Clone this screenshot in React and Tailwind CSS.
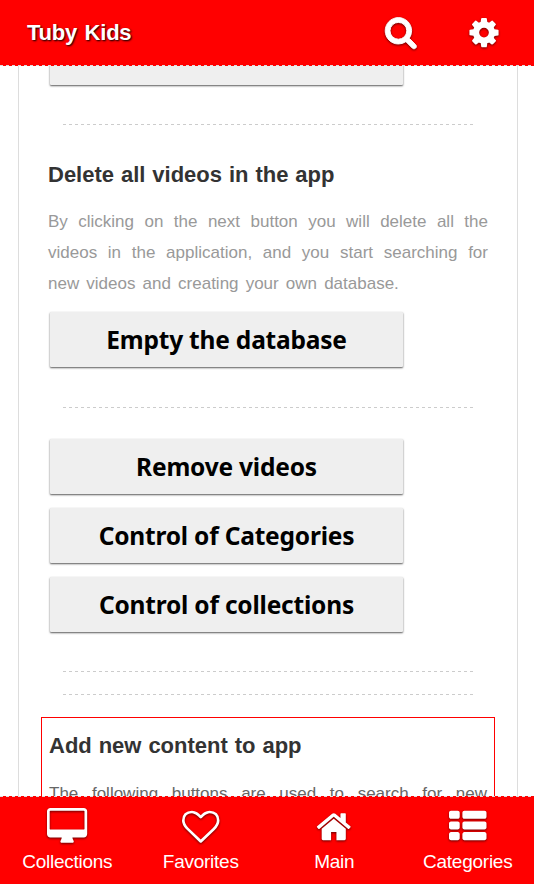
const icons = {
    search: 'M1216 832q0-185-131.5-316.5t-316.5-131.5-316.5 131.5-131.5 316.5 131.5 316.5 316.5 131.5 316.5-131.5 131.5-316.5zm512 832q0 52-38 90t-90 38q-54 0-90-38l-343-342q-179 124-399 124-143 0-273.5-55.5t-225-150-150-225-55.5-273.5 55.5-273.5 150-225 225-150 273.5-55.5 273.5 55.5 225 150 150 225 55.5 273.5q0 220-124 399l343 343q37 37 37 90z',
    cog: 'M1152 896q0-106-75-181t-181-75-181 75-75 181 75 181 181 75 181-75 75-181zm512-109v222q0 12-8 23t-20 13l-185 28q-19 54-39 91 35 50 107 138 10 12 10 25t-9 23q-27 37-99 108t-94 71q-12 0-26-9l-138-108q-44 23-91 38-16 136-29 186-7 28-36 28h-222q-14 0-24.5-8.5t-11.5-21.5l-28-184q-49-16-90-37l-141 107q-10 9-25 9-14 0-25-11-126-114-165-168-7-10-7-23 0-12 8-23 15-21 51-66.5t54-70.5q-27-50-41-99l-183-27q-13-2-21-12.5t-8-23.5v-222q0-12 8-23t19-13l186-28q14-46 39-92-40-57-107-138-10-12-10-24 0-10 9-23 26-36 98.5-107.5t94.5-71.5q13 0 26 10l138 107q44-23 91-38 16-136 29-186 7-28 36-28h222q14 0 24.5 8.5t11.5 21.5l28 184q49 16 90 37l142-107q9-9 24-9 13 0 25 10 129 119 165 170 7 8 7 22 0 12-8 23-15 21-51 66.5t-54 70.5q26 50 41 98l183 28q13 2 21 12.5t8 23.5z',
    desktop: 'M1792 992v-832q0-13-9.5-22.5t-22.5-9.5h-1600q-13 0-22.5 9.5t-9.5 22.5v832q0 13 9.5 22.5t22.5 9.5h1600q13 0 22.5-9.5t9.5-22.5zm128-832v1088q0 66-47 113t-113 47h-544q0 37 16 77.5t32 71 16 43.5q0 26-19 45t-45 19h-512q-26 0-45-19t-19-45q0-14 16-44t32-70 16-78h-544q-66 0-113-47t-47-113v-1088q0-66 47-113t113-47h1600q66 0 113 47t47 113z',
    heart: 'M1664 596q0-81-21.5-143t-55-98.5-81.5-59.5-94-31-98-8-112 25.5-110.5 64-86.5 72-60 61.5q-18 22-49 22t-49-22q-24-28-60-61.5t-86.5-72-110.5-64-112-25.5-98 8-94 31-81.5 59.5-55 98.5-21.5 143q0 168 187 355l581 560 580-559q188-188 188-356zm128 0q0 221-229 450l-623 600q-18 18-44 18t-44-18l-624-602q-10-8-27.5-26t-55.5-65.5-68-97.5-53.5-121-23.5-138q0-220 127-344t351-124q62 0 126.5 21.5t120 58 95.5 68.5 76 68q36-36 76-68t95.5-68.5 120-58 126.5-21.5q224 0 351 124t127 344z',
    home: 'M1472 992v480q0 26-19 45t-45 19h-384v-384h-256v384h-384q-26 0-45-19t-19-45v-480q0-1 .5-3t.5-3l575-474 575 474q1 2 1 6zm223-69l-62 74q-8 9-21 11h-3q-13 0-21-7l-692-577-692 577q-12 8-24 7-13-2-21-11l-62-74q-8-10-7-23.5t11-21.5l719-599q32-26 76-26t76 26l244 204v-195q0-14 9-23t23-9h192q14 0 23 9t9 23v408l219 182q10 8 11 21.5t-7 23.5z',
    list: 'M512 1248v192q0 40-28 68t-68 28h-320q-40 0-68-28t-28-68v-192q0-40 28-68t68-28h320q40 0 68 28t28 68zm0-512v192q0 40-28 68t-68 28h-320q-40 0-68-28t-28-68v-192q0-40 28-68t68-28h320q40 0 68 28t28 68zm1280 512v192q0 40-28 68t-68 28h-960q-40 0-68-28t-28-68v-192q0-40 28-68t68-28h960q40 0 68 28t28 68zm-1280-1024v192q0 40-28 68t-68 28h-320q-40 0-68-28t-28-68v-192q0-40 28-68t68-28h320q40 0 68 28t28 68zm1280 512v192q0 40-28 68t-68 28h-960q-40 0-68-28t-28-68v-192q0-40 28-68t68-28h960q40 0 68 28t28 68zm0-512v192q0 40-28 68t-68 28h-960q-40 0-68-28t-28-68v-192q0-40 28-68t68-28h960q40 0 68 28t28 68z',
};

const tabs = [
    { label: 'Collections', icon: 'desktop' },
    { label: 'Favorites', icon: 'heart' },
    { label: 'Main', icon: 'home' },
    { label: 'Categories', icon: 'list' },
];

function Icon({ name, className = '' }) {
    const width = name === 'desktop' ? 1920 : 1792;

    return (
        <svg
            viewBox={`0 0 ${width} 1792`}
            fill="currentColor"
            className={`shrink-0 overflow-visible drop-shadow-[0.5px_1px_1px_rgba(0,0,0,0.6)] ${className}`}
        >
            <path d={icons[name]} />
        </svg>
    );
}

function Divider({ className = '' }) {
    return (
        <div className={`ml-[15px] h-px w-[410px] bg-[repeating-linear-gradient(90deg,#ccc_0_3px,transparent_3px_5.985px)] ${className}`} />
    );
}

function ActionButton({ children, className = '' }) {
    return (
        <button className={`ml-[2px] block h-[55px] w-[353px] rounded-[1px] bg-[#efefef] font-['Noto_Sans',sans-serif] text-[24.5px] font-bold leading-[56px] tracking-[-0.2px] text-black shadow-[0_1px_2px_rgba(0,0,0,0.65)] ${className}`}>
            {children}
        </button>
    );
}

export default function App() {
    return (
        <div className="flex h-[884px] w-[534px] flex-col overflow-hidden bg-white font-['Liberation_Sans',Arial,sans-serif]">
            <header className="flex h-[66px] shrink-0 flex-col bg-[#f00] text-white">
                <div className="flex h-[65px] items-center pl-[27px]">
                    <h1 className="w-[356.5px] text-[22px] font-bold tracking-[-0.2px] [text-shadow:1px_1px_2px_#000] [word-spacing:1.5px]">Tuby Kids</h1>
                    <Icon name="search" className="h-[33.6px] w-[33.6px] -translate-y-[0.8px] stroke-current stroke-[50]" />
                    <Icon name="cog" className="ml-[50px] h-[34px] w-[34px] -translate-y-[0.4px]" />
                </div>
                <div className="h-px bg-[repeating-linear-gradient(90deg,#ddd_0_3px,transparent_3px_6px)]" />
            </header>

            <main className="ml-[18px] h-[730px] w-[500px] shrink-0 overflow-hidden border-x border-[#ddd] px-[29px]">
                <ActionButton className="-mt-9" />
                <Divider className="mt-[39px]" />

                <h2 className="mt-[34px] h-[31px] text-[22px] font-bold leading-[31px] text-[#333] [word-spacing:0.8px]">Delete all videos in the app</h2>
                <p className="mt-4 w-[440px] text-justify text-[17px] leading-[31px] text-[#999] [word-spacing:2.4px]">
                    By clicking on the next button you will delete all the videos in the application, and you start searching for new videos and creating your own database.
                </p>
                <ActionButton className="mt-[13px]">Empty the database</ActionButton>
                <Divider className="mt-10" />

                <div className="mt-[31px] flex flex-col gap-[14px]">
                    <ActionButton className="shadow-[0_1px_2px_rgba(0,0,0,0.9)]">Remove videos</ActionButton>
                    <ActionButton>Control of Categories</ActionButton>
                    <ActionButton>Control of collections</ActionButton>
                </div>
                <Divider className="mt-[39px]" />
                <Divider className="mt-[22px]" />

                <section className="-ml-[7px] mt-[22px] h-[200px] w-[454px] border border-[#f00] px-[7px]">
                    <h2 className="mt-3 h-[31px] text-[22px] font-bold leading-[31px] text-[#333] [word-spacing:0.8px]">Add new content to app</h2>
                    <p className="mt-[17px] w-[438px] text-justify text-[17px] leading-[31px] text-[#666] [word-spacing:2.4px]">
                        The following buttons are used to search for new videos
                    </p>
                </section>
            </main>

            <nav className="flex h-[88px] shrink-0 flex-col bg-[#f00] text-white">
                <div className="h-px bg-[repeating-linear-gradient(90deg,#ddd_0_3px,transparent_3px_6px)]" />
                <div className="grid grid-cols-4">
                    {tabs.map((tab) => (
                        <a key={tab.label} className="flex flex-col items-center pt-[11px]">
                            <Icon name={tab.icon} className="h-[37.5px]" />
                            <span className="ml-px mt-1 text-[19px] leading-6 tracking-[-0.25px]">{tab.label}</span>
                        </a>
                    ))}
                </div>
            </nav>
        </div>
    );
}
